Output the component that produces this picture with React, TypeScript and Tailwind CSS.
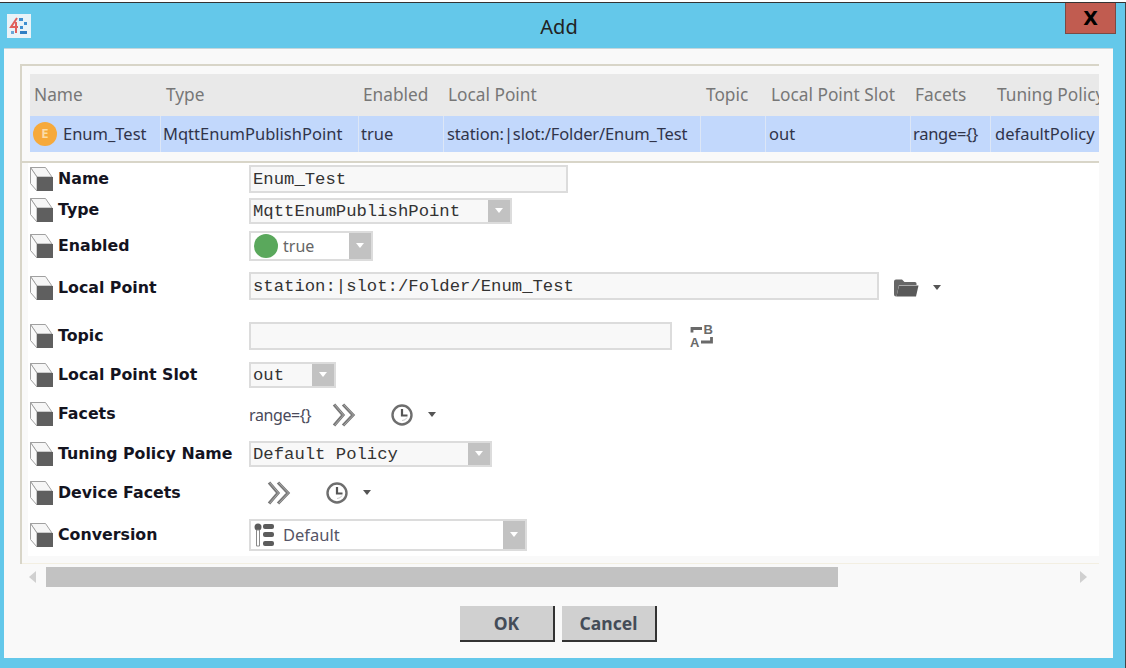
import React from 'react';

const sans = 'font-["Noto_Sans",sans-serif]';
const mono = 'font-["Liberation_Mono",monospace]';

const columns = [
  { title: 'Name', width: 'w-[131px]', head: 'pl-[4px]', cell: 'pl-[2px]', value: 'Enum_Test', icon: true },
  { title: 'Type', width: 'w-[198px]', head: 'pl-[5px]', cell: 'pl-[2px]', value: 'MqttEnumPublishPoint' },
  { title: 'Enabled', width: 'w-[85px]', head: 'pl-[4px]', cell: 'pl-[2px]', value: 'true' },
  { title: 'Local Point', width: 'w-[257px]', head: 'pl-[4px]', cell: 'pl-[3px] tracking-[-0.13px]', value: 'station:|slot:/Folder/Enum_Test' },
  { title: 'Topic', width: 'w-[65px]', head: 'pl-[5px]', cell: 'pl-[3px]', value: '' },
  { title: 'Local Point Slot', width: 'w-[145px]', head: 'pl-[5px]', cell: 'pl-[3px]', value: 'out' },
  { title: 'Facets', width: 'w-[80px]', head: 'pl-[4px]', cell: 'pl-[2px] tracking-[-0.3px]', value: 'range={}' },
  { title: 'Tuning Policy', width: 'w-[108px]', head: 'pl-[6px]', cell: 'pl-[4px]', value: 'defaultPolicy' },
];

const Cube = () => (
  <svg width="24" height="24" viewBox="0 0 24 24" className="shrink-0">
    <path d="M1.500 .5h15L23 10H8z" fill="#f6f6f6" stroke="#a0a0a0" strokeWidth="1" />
    <path d="M1.500 .5v16L8 24V10z" fill="#fbfbfb" stroke="#a0a0a0" strokeWidth="1" />
    <path d="M8 10h16v14H8z" fill="#5f5f5f" />
  </svg>
);

const Arrow = ({ dark }: { dark?: boolean }) => (
  <svg width={dark ? 8 : 10} height="6" viewBox={dark ? '1 0 8 6' : '0 0 10 6'} className="shrink-0">
    <path d="M1 0h8L5 5z" fill={dark ? '#555555' : '#ffffff'} />
  </svg>
);

const Chevrons = () => (
  <svg width="24" height="24" viewBox="0 0 24 24" className="shrink-0">
    <path d="M2 1.500 11 12 2 22.500M11 1.500 21 12 11 22.500" fill="none" stroke="#777777" strokeWidth="3.200" />
    <path d="M2.500 1.500 11.500 12 2.500 22.500M11.500 1.500 21.500 12 11.500 22.500" fill="none" stroke="#a8a8a8" strokeWidth="1" />
  </svg>
);

const Clock = () => (
  <svg width="24" height="24" viewBox="0 0 24 24" className="shrink-0">
    <circle cx="12" cy="12" r="9.500" fill="none" stroke="#6e6e6e" strokeWidth="2.400" />
    <path d="M12 17.500a5.500 5.500 0 0 0 5-3" fill="none" stroke="#c8c8c8" strokeWidth="1" />
    <path d="M12 6v6.500h5.500" fill="none" stroke="#555555" strokeWidth="2.200" />
  </svg>
);

const Folder = () => (
  <svg width="26" height="20" viewBox="0 0 26 20" className="shrink-0">
    <path d="M1 3.500Q1 1.500 3 1.500h6l2.500 2.500H22q1.500 0 1.500 1.500V7H6L3.500 18.500H3q-2 0-2-2z" fill="#666666" />
    <path d="M6 7.500H25.500l-2.500 11H3.500z" fill="#595959" />
  </svg>
);

const Swap = () => (
  <svg width="26" height="26" viewBox="0 0 26 26" className="shrink-0 overflow-visible">
    <path d="M3 10.500V6.500h10" fill="none" stroke="#6a6a6a" strokeWidth="2.800" />
    <path d="M22.500 15v5H12" fill="none" stroke="#6a6a6a" strokeWidth="2.800" />
    <text x="14.500" y="11.500" fontSize="13" fontWeight="700" fill="#6a6a6a" fontFamily="Liberation Sans">B</text>
    <text x="1" y="25" fontSize="13" fontWeight="700" fill="#6a6a6a" fontFamily="Liberation Sans">A</text>
  </svg>
);

const ConversionIcon = () => (
  <svg width="26" height="26" viewBox="0 0 26 26" className="shrink-0">
    <circle cx="6" cy="5" r="3.500" fill="#5c5c5c" />
    <path d="M4.500 8h3v16h-3z" fill="#ffffff" stroke="#8a8a8a" strokeWidth="1" />
    <rect x="11" y="2" width="11" height="5" rx="2" fill="#5c5c5c" />
    <rect x="11" y="10" width="11" height="5" rx="2" fill="#5c5c5c" />
    <rect x="11" y="19" width="11" height="5" rx="2" fill="#5c5c5c" />
  </svg>
);

const Select = ({ width, height, text }: { width: string; height: string; text: string }) => (
  <div className={`${width} ${height} flex items-stretch bg-[#f8f8f8] border-2 border-[#dcdcdc]`}>
    <span className={`${mono} flex-1 pl-[2px] pt-[2px] text-[17.25px] leading-none self-center text-[#333333] whitespace-pre`}>{text}</span>
    <span className="w-[22px] bg-[#c2c2c2] flex items-center justify-center"><Arrow /></span>
  </div>
);

const TextBox = ({ width, text, raise }: { width: string; text?: string; raise?: boolean }) => (
  <div className={`${width} h-[28px] ${raise ? 'mb-[4px]' : ''} flex items-center bg-[#f8f8f8] border-2 border-[#dcdcdc] pl-[2px] pt-[2px] ${mono} text-[17.25px] text-[#333333] whitespace-pre`}>{text}</div>
);

const FormRow = ({ label, height, children }: { label: string; height: string; children?: React.ReactNode }) => (
  <div className={`${height} flex items-center`}>
    <div className="w-[221px] pl-[1px] pb-[1px] flex items-center gap-[5px] shrink-0">
      <Cube />
      <span className='font-["DejaVu_Sans",sans-serif] text-[15.8px] font-bold text-[#14141f] whitespace-nowrap'>{label}</span>
    </div>
    {children}
  </div>
);

export default function App() {
  return (
    <div className="w-[1126px] h-[668px] overflow-hidden bg-white pt-[2px]">
      <div className="h-[666px] bg-[#64c8ea] border-t border-t-[#333333] border-r border-r-[#444444] flex flex-col">
        <div className="h-[45px] grid grid-cols-[1fr_auto_1fr] shrink-0">
          <div className="pl-[7px] pt-[11px]">
            <div className="w-[24px] h-[24px] bg-[#e9f3f8] flex items-center justify-center">
              <svg width="20" height="20" viewBox="0 0 20 20">
                <path d="M8 2 2 11h7M7 6v11" fill="none" stroke="#e0605c" strokeWidth="2" />
                <rect x="10" y="2" width="4" height="3" fill="#3f8fd0" />
                <rect x="15" y="6" width="3" height="3" fill="#3f8fd0" />
                <rect x="11" y="10" width="3" height="3" fill="#3f8fd0" />
                <rect x="2" y="15" width="3" height="3" fill="#6aa8d8" />
                <rect x="11" y="15" width="7" height="3" fill="#2f7fc4" />
              </svg>
            </div>
          </div>
          <div className={`${sans} text-[20px] pt-[10px] pr-[7px] leading-[28px] text-[#222222]`}>Add</div>
          <div className="flex justify-end pr-[9px]">
            <div className="w-[51px] h-[31px] bg-[#c15c50] border border-[#7a4a44] border-t-0 flex items-center justify-center">
              <span className='font-["DejaVu_Sans",sans-serif] text-[19px] font-bold text-black leading-none'>X</span>
            </div>
          </div>
        </div>

        <div className="ml-[4px] w-[1109px] h-[610px] bg-[#f9f9f9] border-t border-t-[#c4d6dc] flex flex-col pt-[15px]">
          <div className="ml-[16px] w-[1079px] border-l-2 border-l-[#d8d5c8] flex flex-col">
            <div className="h-[10px] border-t-2 border-t-[#d8d5c8]" />
            <div className="ml-[8px] w-[1069px] overflow-hidden">
              <div className="flex h-[42px] w-[1069px] bg-[#e9e9e9]">
                {columns.map(c => (
                  <div key={c.title} className={`${c.width} ${c.head} pb-[1px] shrink-0 flex items-center overflow-hidden whitespace-nowrap ${sans} text-[17.3px] text-[#777777]`}>{c.title}</div>
                ))}
              </div>
              <div className="flex h-[36px] w-[1069px] bg-[#c2d8fc]">
                {columns.map(c => (
                  <div key={c.title} className={`${c.width} ${c.cell} shrink-0 flex items-center gap-[6px] overflow-hidden whitespace-nowrap border-r border-r-[#dce6f6] last:border-r-0 ${sans} text-[16.5px] text-[#30344a]`}>
                    {c.icon && <span className="ml-[1px] w-[24px] h-[24px] rounded-full bg-[#f6a93b] flex items-center justify-center text-[13px] font-bold text-[#fbdca8]">E</span>}
                    {c.value}
                  </div>
                ))}
              </div>
            </div>
            <div className="h-[11px] border-b-2 border-b-[#d8d5c8]" />
            <div className="ml-[6px] h-[393px] bg-white flex flex-col pt-[2px]">
              <FormRow label="Name" height="h-[28px]">
                <TextBox width="w-[319px]" text="Enum_Test" />
              </FormRow>
              <FormRow label="Type" height="h-[35px]">
                <Select width="w-[263px]" height="h-[26px]" text="MqttEnumPublishPoint" />
              </FormRow>
              <FormRow label="Enabled" height="h-[36px]">
                <div className="w-[124px] h-[30px] flex items-stretch bg-white border-2 border-[#dcdcdc]">
                  <span className="flex-1 flex items-center gap-[5px] pl-[3px]">
                    <span className="w-[24px] h-[24px] rounded-full bg-[#5aa85c]" />
                    <span className={`${sans} text-[16px] text-[#666666]`}>true</span>
                  </span>
                  <span className="w-[22px] bg-[#c2c2c2] flex items-center justify-center"><Arrow /></span>
                </div>
              </FormRow>
              <FormRow label="Local Point" height="h-[48px]">
                <TextBox width="w-[630px]" text="station:|slot:/Folder/Enum_Test" raise />
                <span className="ml-[14px]"><Folder /></span>
                <span className="ml-[14px]"><Arrow dark /></span>
              </FormRow>
              <FormRow label="Topic" height="h-[48px]">
                <TextBox width="w-[423px]" />
                <span className="ml-[17px] -mt-[2px]"><Swap /></span>
              </FormRow>
              <FormRow label="Local Point Slot" height="h-[30px]">
                <Select width="w-[87px]" height="h-[26px]" text="out" />
              </FormRow>
              <FormRow label="Facets" height="h-[49px]">
                <span className={`${sans} text-[16px] tracking-[-0.4px] text-[#4a4a5a]`}>range={'{}'}</span>
                <span className="ml-[21px]"><Chevrons /></span>
                <span className="ml-[34px]"><Clock /></span>
                <span className="ml-[14px]"><Arrow dark /></span>
              </FormRow>
              <FormRow label="Tuning Policy Name" height="h-[30px]">
                <Select width="w-[243px]" height="h-[26px]" text="Default Policy" />
              </FormRow>
              <FormRow label="Device Facets" height="h-[48px]">
                <span className="ml-[18px]"><Chevrons /></span>
                <span className="ml-[34px]"><Clock /></span>
                <span className="ml-[14px]"><Arrow dark /></span>
              </FormRow>
              <FormRow label="Conversion" height="h-[36px]">
                <div className="w-[278px] h-[32px] flex items-stretch bg-white border-2 border-[#dcdcdc]">
                  <span className="flex-1 flex items-center gap-[5px] pl-[1px]">
                    <ConversionIcon />
                    <span className={`${sans} text-[16.5px] text-[#555566]`}>Default</span>
                  </span>
                  <span className="w-[22px] bg-[#c2c2c2] flex items-center justify-center"><Arrow /></span>
                </div>
              </FormRow>
            </div>
            <div className="h-[8px] border-b border-b-[#f3efe2]" />
          </div>

          <div className="ml-[16px] w-[1078px] h-[20px] mt-[3px] flex items-stretch shrink-0">
            <div className="w-[26px] flex items-center pl-[9px]">
              <svg width="7" height="12" viewBox="0 0 7 12"><path d="M7 0v12L0 6z" fill="#d0d0d0" /></svg>
            </div>
            <div className="w-[792px] bg-[#c2c2c2]" />
            <div className="flex-1 flex items-center justify-end pr-[11px]">
              <svg width="7" height="12" viewBox="0 0 7 12"><path d="M0 0v12l7-6z" fill="#d0d0d0" /></svg>
            </div>
          </div>

          <div className="mt-[19px] flex justify-center gap-[7px]">
            <button className={`w-[95px] h-[36px] bg-[#d0d0d0] border-r-2 border-b-2 border-r-[#333333] border-b-[#333333] ${sans} text-[17.5px] font-bold text-[#444c58]`}>OK</button>
            <button className={`w-[95px] h-[36px] bg-[#d0d0d0] border-r-2 border-b-2 border-r-[#333333] border-b-[#333333] ${sans} text-[17.5px] font-bold text-[#444c58]`}>Cancel</button>
          </div>
        </div>
      </div>
    </div>
  );
}
